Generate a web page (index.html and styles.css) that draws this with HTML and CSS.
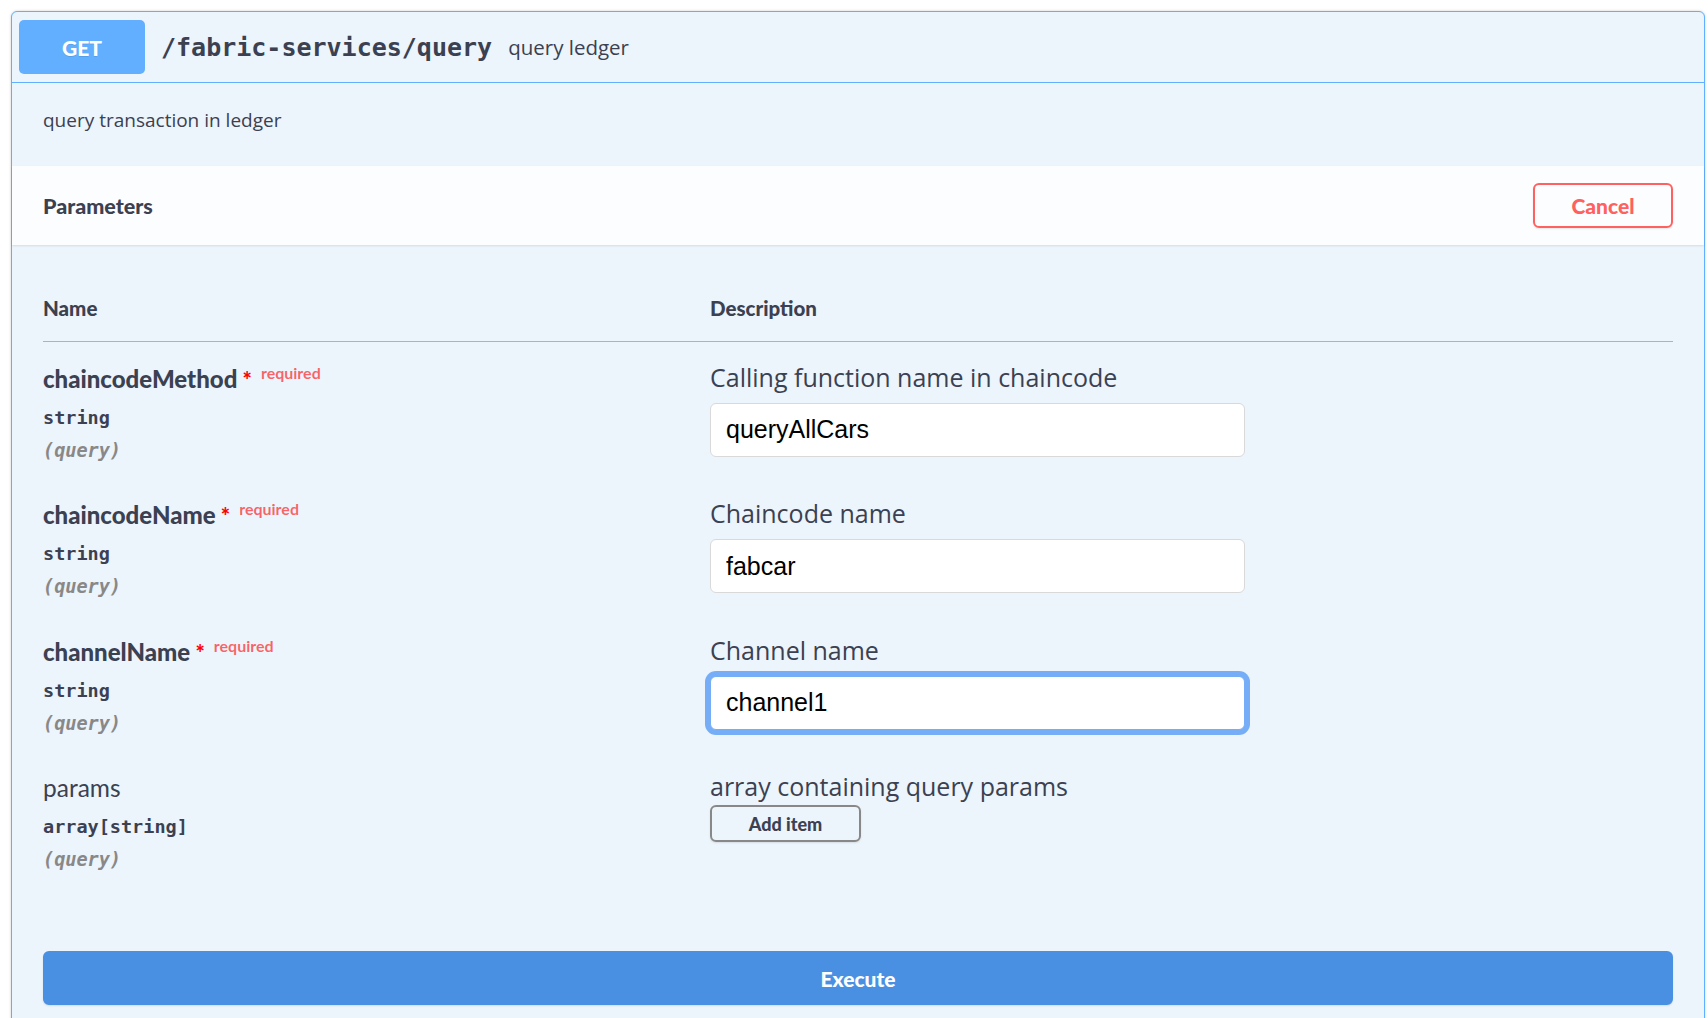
FILE: index.html
```html
<!DOCTYPE html>
<html>
<head>
<meta charset="utf-8">
<link rel="stylesheet" href="styles.css">
</head>
<body>
<div class="opblock">
  <div class="summary">
    <span class="method">GET</span>
    <span class="path">/fabric-services/query</span>
    <span class="summary-desc">query ledger</span>
  </div>
  <div class="desc-wrapper">
    <p>query transaction in ledger</p>
  </div>
  <div class="section-header">
    <h4 class="section-title">Parameters</h4>
    <button class="btn-cancel">Cancel</button>
  </div>
  <div class="table-container">
    <table class="params">
      <thead>
        <tr>
          <th class="col-name">Name</th>
          <th class="col-desc">Description</th>
        </tr>
      </thead>
      <tbody>
        <tr>
          <td>
            <div class="p-name req">chaincodeMethod<span class="star">&nbsp;*</span><span class="req-label">required</span></div>
            <div class="p-type">string</div>
            <div class="p-in">(query)</div>
          </td>
          <td>
            <p class="p-desc">Calling function name in chaincode</p>
            <input class="p-input" type="text" value="queryAllCars">
          </td>
        </tr>
        <tr>
          <td>
            <div class="p-name req">chaincodeName<span class="star">&nbsp;*</span><span class="req-label">required</span></div>
            <div class="p-type">string</div>
            <div class="p-in">(query)</div>
          </td>
          <td>
            <p class="p-desc">Chaincode name</p>
            <input class="p-input" type="text" value="fabcar">
          </td>
        </tr>
        <tr>
          <td>
            <div class="p-name req">channelName<span class="star">&nbsp;*</span><span class="req-label">required</span></div>
            <div class="p-type">string</div>
            <div class="p-in">(query)</div>
          </td>
          <td>
            <p class="p-desc">Channel name</p>
            <input class="p-input focused" type="text" value="channel1">
          </td>
        </tr>
        <tr>
          <td>
            <div class="p-name">params</div>
            <div class="p-type">array[string]</div>
            <div class="p-in">(query)</div>
          </td>
          <td>
            <p class="p-desc">array containing query params</p>
            <button class="btn-add">Add item</button>
          </td>
        </tr>
      </tbody>
    </table>
  </div>
  <div class="execute-wrapper">
    <button class="btn-execute">Execute</button>
  </div>
</div>
</body>
</html>
```
FILE: styles.css
```css
html, body {
  margin: 0;
  padding: 0;
  overflow: hidden;
  background: #ffffff;
}
body {
  color: #3b4151;
  font-family: "Lato", "Open Sans", sans-serif;
}
.opblock {
  margin: 11px 3px 0 11px;
  border: 1px solid #61affe;
  border-radius: 6px;
  background: #ecf4fc;
  box-shadow: 0 0 3px rgba(0, 0, 0, 0.19);
}
.summary {
  display: flex;
  align-items: center;
  padding: 8px 7px;
  border-bottom: 1px solid #61affe;
}
.method {
  width: 126px;
  height: 54px;
  display: flex;
  align-items: center;
  justify-content: center;
  background: #61affe;
  color: #fff;
  border-radius: 5px;
  font-family: "Lato", sans-serif;
  font-weight: 900;
  font-size: 21px;
  text-shadow: 0 1px 0 rgba(0, 0, 0, 0.1);
}
.path {
  padding: 0 16px;
  font-family: "DejaVu Sans Mono", monospace;
  font-weight: 700;
  font-size: 25px;
  color: #3b4151;
}
.summary-desc {
  font-family: "Open Sans", sans-serif;
  font-size: 20.5px;
  color: #3b4151;
}
.desc-wrapper {
  padding: 24px 31px 32px;
}
.desc-wrapper p {
  margin: 0;
  font-family: "Open Sans", sans-serif;
  font-size: 19px;
  line-height: 27px;
}
.section-header {
  height: 79px;
  padding: 0 31px;
  display: flex;
  align-items: center;
  justify-content: space-between;
  background: rgba(255, 255, 255, 0.8);
  box-shadow: 0 1px 2px rgba(0, 0, 0, 0.1);
}
.section-title {
  margin: 0;
  font-family: "Lato", sans-serif;
  font-weight: 900;
  font-size: 21.5px;
}
.btn-cancel {
  width: 140px;
  height: 45px;
  background: transparent;
  border: 2px solid #ff6060;
  border-radius: 6px;
  color: #ff6060;
  font-family: "Lato", sans-serif;
  font-weight: 900;
  font-size: 21px;
  box-shadow: 0 1px 2px rgba(0, 0, 0, 0.1);
}
.table-container {
  padding: 31px 31px 32px;
}
.params {
  width: 100%;
  border-collapse: collapse;
}
.params th {
  text-align: left;
  padding: 19px 0;
  line-height: 27px;
  font-family: "Lato", sans-serif;
  font-weight: 900;
  font-size: 20.5px;
  border-bottom: 1px solid rgba(59, 65, 81, 0.2);
}
.col-name {
  width: 667px;
}
.params td {
  padding: 15.75px 0;
  vertical-align: top;
}
.p-name {
  height: 42px;
  line-height: 42px;
  font-family: "Lato", sans-serif;
  font-size: 24.5px;
  white-space: nowrap;
}
.p-name.req {
  font-weight: 900;
  font-size: 24px;
}
.star {
  color: red;
  font-size: 22px;
  position: relative;
  top: 0;
}
.req-label {
  color: rgba(255, 0, 0, 0.6);
  font-size: 16px;
  font-weight: 700;
  position: relative;
  top: -9px;
  padding-left: 9px;
}
.p-type {
  padding: 8px 0;
  line-height: 20px;
  font-family: "DejaVu Sans Mono", monospace;
  font-weight: 700;
  font-size: 18.5px;
}
.p-in {
  margin-top: 3px;
  line-height: 24px;
  font-family: "DejaVu Sans Mono", monospace;
  font-weight: 700;
  font-style: italic;
  font-size: 18.5px;
  color: #888888;
}
.p-desc {
  margin: 0;
  line-height: 38px;
  font-family: "Open Sans", sans-serif;
  font-size: 25px;
}
.p-input {
  display: block;
  box-sizing: border-box;
  width: 535px;
  height: 54px;
  margin: 7px 0 6px;
  padding: 0 15px;
  border: 1px solid #d9d9d9;
  border-radius: 6px;
  background: #fff;
  font-family: "Liberation Sans", Arial, sans-serif;
  font-size: 25px;
  color: #000;
  outline: none;
}
.p-input.focused {
  border-color: #75adf6;
  box-shadow: 0 0 0 5px #75adf6;
}
.btn-add {
  width: 151px;
  height: 37px;
  background: transparent;
  border: 2px solid #888888;
  border-radius: 6px;
  color: #3b4151;
  font-family: "Lato", sans-serif;
  font-weight: 900;
  font-size: 18px;
  box-shadow: 0 1px 2px rgba(0, 0, 0, 0.1);
}
.execute-wrapper {
  padding: 31px 31px 31px;
}
.btn-execute {
  display: block;
  width: 100%;
  height: 54px;
  background: #4a90e2;
  border: 2px solid #4a90e2;
  border-radius: 6px;
  color: #fff;
  font-family: "Lato", sans-serif;
  font-weight: 900;
  font-size: 21px;
  box-shadow: 0 1px 2px rgba(0, 0, 0, 0.1);
}
```
